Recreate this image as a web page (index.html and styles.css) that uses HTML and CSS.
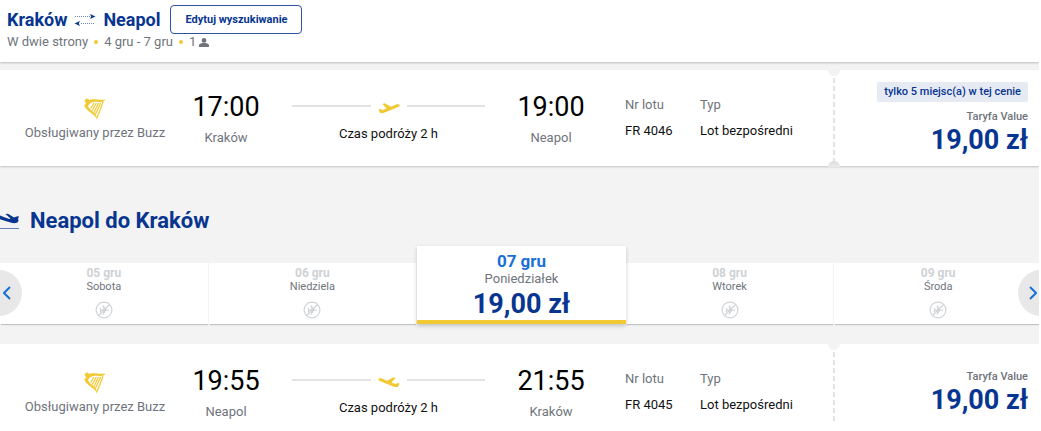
FILE: index.html
```html
<!DOCTYPE html>
<html lang="pl">
<head>
<meta charset="utf-8">
<title>Kraków – Neapol</title>
<link rel="stylesheet" href="styles.css">
</head>
<body>
<svg class="defs" aria-hidden="true">
  <symbol id="harp" viewBox="0 0 22 22">
    <path fill="currentColor" d="M.5 2.500 2 .8 4 .5 5 2C9 .2 13 2.200 21.500 1.700 20 3.200 18 4.200 15 4 11 3.600 8 3.900 6 5.500L4 8C5 11.500 10 13 12.300 18L13 21.500C11 16 4 14 1.200 9.500L.3 7.500 2 5.500Z"/>
    <path fill="none" stroke="currentColor" stroke-width="1.200" d="M19 3.500C17.500 9 15 15 12.500 20.500M10 5 6.800 10.500M12.300 5 8.300 12.500M14.500 5 10 14.500M16.700 5 11.300 16.500"/>
  </symbol>
  <symbol id="plane" viewBox="0 0 22 12">
    <path fill="currentColor" d="M.5 7.500 2.300 7 4.500 8 8.500 6.500 4.500 2 6.600 1.200 13 4.700 18 2.600C20 1.900 21.500 2.200 21.700 3 21.900 4 20.500 4.900 19 5.500L8 9.900C5.500 10.900 3 11.300 2 11Z"/>
  </symbol>
  <symbol id="no-flight" viewBox="0 0 18 18">
    <g fill="none" stroke="currentColor" stroke-width="1.200"><circle cx="9" cy="9" r="7.900"/><path d="M3.500 14.500 14.500 3.500"/></g>
    <path fill="currentColor" d="M4.500 7h1l1 1.400h2L7.500 4.500h1.200L11 8.400h2c1.500 0 1.500 1.300 0 1.300h-2L8.700 13.500H7.500l1-3.800h-2L5.500 11h-1l.6-2Z"/>
  </symbol>
</svg>

<div class="page">
  <header class="summary">
    <div class="route-row">
      <h1 class="route">
        <span>Kraków</span>
        <svg class="route-arrows" viewBox="0 0 22 12" aria-hidden="true">
          <path stroke="currentColor" stroke-opacity=".6" stroke-dasharray="1 1" d="M1 2.500h15M7 9.500h14"/>
          <path fill="currentColor" d="M16 0l5.500 2.500L16 5l1.200-2.500ZM6 7 .5 9.500 6 12 4.800 9.500Z"/>
        </svg>
        <span>Neapol</span>
      </h1>
      <button class="edit" type="button">Edytuj wyszukiwanie</button>
    </div>
    <div class="details">
      <span>W dwie strony</span><i class="dot"></i><span>4 gru - 7 gru</span><i class="dot"></i>
      <span class="people">1
        <svg class="person" viewBox="0 0 10 9" aria-hidden="true"><path fill="currentColor" d="M5 0a2.400 2.400 0 0 1 0 4.800A2.400 2.400 0 0 1 5 0M0 9V7.500C0 5.500 3 5 5 5s5 .5 5 2.500V9Z"/></svg>
      </span>
    </div>
  </header>

  <main>
    <article class="card">
      <div class="flight">
        <div class="carrier"><svg class="harp"><use href="#harp"/></svg><span>Obsługiwany przez Buzz</span></div>
        <div class="stop"><time class="hour">17:00</time><span>Kraków</span></div>
        <div class="leg"><div class="track"><svg class="plane"><use href="#plane"/></svg></div><span>Czas podróży 2 h</span></div>
        <div class="stop"><time class="hour">19:00</time><span>Neapol</span></div>
        <dl class="facts">
          <div><dt>Nr lotu</dt><dd>FR 4046</dd></div>
          <div><dt>Typ</dt><dd>Lot bezpośredni</dd></div>
        </dl>
      </div>
      <div class="fare">
        <span class="badge">tylko 5 miejsc(a) w tej cenie</span>
        <span class="fare-name">Taryfa Value</span>
        <strong class="price">19,00 zł</strong>
      </div>
    </article>

    <h2 class="return-title">
      <svg class="landing" viewBox="0 0 28 20" aria-hidden="true">
        <path fill="currentColor" d="M4 2.500 9 4.500 14 6.500 18.500 8 19.500 7.500 14.500 3 17 2.800 23 6.500 25.500 5.500 28 5.300 27 8C28 9.500 27.500 11.500 25 12 22 12.500 19 11.500 16 10.500L8 8 4 5.500Z"/>
        <path stroke="currentColor" stroke-opacity=".6" d="M4 17.500h24"/>
      </svg>
      Neapol do Kraków
    </h2>

    <section class="carousel">
      <button class="day" type="button" disabled><b>05 gru</b><span>Sobota</span><svg class="no-flight"><use href="#no-flight"/></svg></button>
      <button class="day" type="button" disabled><b>06 gru</b><span>Niedziela</span><svg class="no-flight"><use href="#no-flight"/></svg></button>
      <button class="day active" type="button"><b>07 gru</b><span>Poniedziałek</span><strong class="price">19,00 zł</strong></button>
      <button class="day" type="button" disabled><b>08 gru</b><span>Wtorek</span><svg class="no-flight"><use href="#no-flight"/></svg></button>
      <button class="day" type="button" disabled><b>09 gru</b><span>Środa</span><svg class="no-flight"><use href="#no-flight"/></svg></button>
      <button class="nav prev" type="button" aria-label="Poprzednie dni"><svg viewBox="0 0 8 14"><path d="M7 1 1 7l6 6"/></svg></button>
      <button class="nav next" type="button" aria-label="Następne dni"><svg viewBox="0 0 8 14"><path d="M1 1l6 6-6 6"/></svg></button>
    </section>

    <article class="card cut">
      <div class="flight">
        <div class="carrier"><svg class="harp"><use href="#harp"/></svg><span>Obsługiwany przez Buzz</span></div>
        <div class="stop"><time class="hour">19:55</time><span>Neapol</span></div>
        <div class="leg"><div class="track"><svg class="plane back"><use href="#plane"/></svg></div><span>Czas podróży 2 h</span></div>
        <div class="stop"><time class="hour">21:55</time><span>Kraków</span></div>
        <dl class="facts">
          <div><dt>Nr lotu</dt><dd>FR 4045</dd></div>
          <div><dt>Typ</dt><dd>Lot bezpośredni</dd></div>
        </dl>
      </div>
      <div class="fare">
        <span class="fare-name">Taryfa Value</span>
        <strong class="price">19,00 zł</strong>
      </div>
    </article>
  </main>
</div>
</body>
</html>
```

FILE: styles.css
```css
:root {
  --navy: #073590;
  --blue: #1a6fd8;
  --yellow: #f1c933;
  --grey: #f3f3f3;
  --muted: #6f747c;
}
* { box-sizing: border-box; }
body {
  margin: 0;
  background: #fff;
  color: #111;
  font: 13px/16px Roboto, sans-serif;
}
h1, h2, dl, dd { margin: 0; }
button { font: inherit; cursor: pointer; }
.defs { position: absolute; width: 0; height: 0; }
.page {
  margin-right: 2px;
  background: var(--grey);
  overflow: hidden;
}

.summary {
  height: 62px;
  padding: 5px 7px 0;
  background: #fff;
  box-shadow: 0 1px 2px #00000038;
}
.route-row { display: flex; align-items: center; gap: 10px; }
.route {
  display: flex;
  align-items: center;
  gap: 7px;
  color: var(--navy);
  font-size: 18px;
  line-height: 22px;
  font-weight: 700;
}
.route-arrows { width: 22px; height: 12px; }
.edit {
  width: 132px;
  height: 29px;
  padding: 0;
  border: 1px solid #2c52a0;
  border-radius: 4px;
  background: #fff;
  color: var(--navy);
  font-size: 11px;
  font-weight: 700;
}
.details {
  display: flex;
  align-items: center;
  gap: 6px;
  color: var(--muted);
}
.dot {
  width: 4px;
  height: 4px;
  border-radius: 50%;
  background: var(--yellow);
}
.people { display: flex; align-items: center; gap: 3px; }
.person { width: 10px; height: 9px; }

.card {
  display: flex;
  height: 96px;
  margin-top: 8px;
  background: #fff;
  box-shadow: 0 1px 2px #0003;
}
.flight { display: flex; flex: 1; padding-left: 25px; }
.carrier, .stop, .leg {
  display: flex;
  flex-direction: column;
  align-items: center;
  color: var(--muted);
}
.carrier { width: 140px; padding-top: 28px; gap: 5px; margin-right: 26px; white-space: nowrap; }
.harp { width: 22px; height: 22px; color: var(--yellow); }
.stop { width: 70px; padding-top: 21px; gap: 7px; }
.hour { color: #000; font-size: 27px; line-height: 32px; }
.leg { flex: 1; margin: 0 31px; padding-top: 30px; gap: 10px; color: #111; }
.track { display: flex; align-items: center; gap: 7px; width: 100%; height: 16px; }
.track::before, .track::after {
  content: "";
  flex: 1;
  height: 2px;
  margin-bottom: 4px;
  background: #e3e3e3;
}
.plane { width: 22px; height: 12px; color: var(--yellow); }
.plane.back { transform: scaleX(-1); }
.facts { display: flex; width: 247px; padding: 27px 0 0 39px; color: #111; }
.facts div { width: 75px; white-space: nowrap; }
dt { margin-bottom: 10px; color: var(--muted); }

.fare {
  position: relative;
  display: flex;
  flex-direction: column;
  align-items: flex-end;
  width: 206px;
  padding: 12px 11px 0 0;
  background: repeating-linear-gradient(#e3e3e3 0 5px, transparent 5px 8px) 0 0 / 2px 100% no-repeat;
}
.fare::before, .fare::after {
  content: "";
  position: absolute;
  left: -5px;
  width: 12px;
  height: 6px;
  background: var(--grey);
}
.fare::before { top: 0; border-radius: 0 0 6px 6px; }
.fare::after { bottom: -1px; border-radius: 6px 6px 0 0; background: linear-gradient(#dcdcdc, #ebebeb); }
.badge {
  padding: 2px 7px;
  margin-bottom: 8px;
  border-radius: 2px;
  background: #e6eaf3;
  color: var(--navy);
  font-size: 11px;
  font-weight: 500;
}
.fare-name { color: var(--muted); font-size: 11px; line-height: 14px; font-weight: 500; }
.price { color: var(--navy); font-size: 27px; line-height: 32px; font-weight: 700; }

.return-title {
  display: flex;
  align-items: center;
  gap: 11px;
  margin: 41px 0 0 -9px;
  color: var(--navy);
  font-size: 22px;
  line-height: 28px;
  font-weight: 700;
}
.landing { width: 28px; height: 20px; }

.carousel {
  position: relative;
  display: grid;
  grid-template-columns: repeat(5, 1fr);
  align-items: end;
  margin: 11px -4px 0 0;
}
.day {
  display: flex;
  flex-direction: column;
  align-items: center;
  justify-content: flex-start;
  height: 61px;
  padding: 3px 0 0;
  border: 0;
  border-right: 1px solid var(--grey);
  background: #fff;
  box-shadow: 0 2px 1px -1px #0003;
  color: var(--muted);
  font-size: 11px;
  line-height: 14px;
}
.day b { color: #ced2d6; font-size: 12px; font-weight: 700; }
.no-flight { width: 18px; height: 18px; margin-top: 7px; color: #d0d3d7; }
.day.active {
  z-index: 1;
  height: 78px;
  padding-top: 4px;
  border-right: 0;
  border-bottom: 4px solid var(--yellow);
  box-shadow: 0 2px 4px #0003;
  font-size: 13px;
}
.active b { color: var(--blue); font-size: 17px; line-height: 22px; font-weight: 700; }
.active .price { line-height: 36px; }
.nav {
  position: absolute;
  z-index: 2;
  top: 24px;
  width: 46px;
  height: 46px;
  border: 0;
  border-radius: 50%;
  background: #e8e8e8;
}
.nav svg { display: block; width: 8px; height: 14px; fill: none; stroke: var(--blue); stroke-width: 2; }
.prev { left: -24px; padding: 0 0 0 27px; }
.next { right: -21px; padding: 0 0 0 11px; }

.cut { height: 79px; margin-top: 20px; box-shadow: none; }
.cut .fare { padding-top: 26px; }
.cut .fare::after { display: none; }
```
